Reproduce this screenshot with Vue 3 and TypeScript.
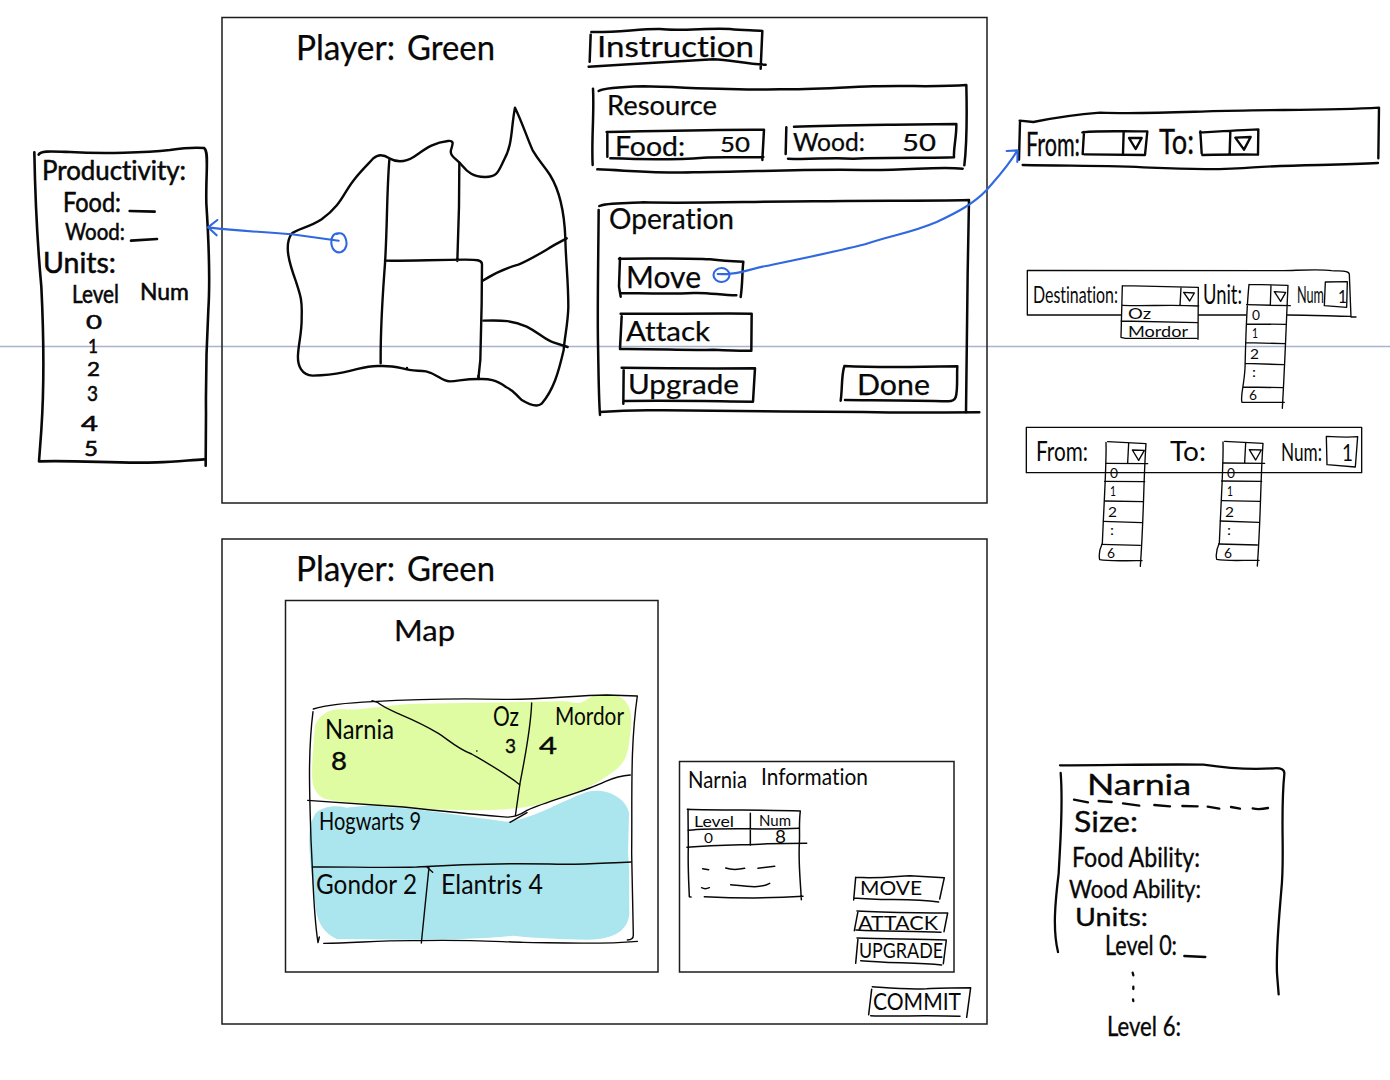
<script setup lang="ts">
type Label = [text: string, x: number, baseline: number, width: number, capHeight: number]
interface Group { name: string; ink: number; labels: Label[] }
interface Sketch { name: string; x: number; y: number; pen: number; strokes: string[]; color?: string }

const CAP = 0.72

const column = (x: number, y: number): Label[] => [
  ['0', x + 3, y, 8, 10],
  ['1', x + 3, y + 18, 6, 9],
  ['2', x + 1, y + 39, 9, 10],
  [':', x + 3, y + 57, 4, 10],
  ['6', x, y + 80, 8, 10],
]

const groups: Group[] = [
  {
    name: 'productivity', ink: 0.55,
    labels: [
      ['Productivity:', 42, 180, 144, 20],
      ['Food:', 63, 212, 58, 19], ['Wood:', 65, 240, 60, 16.5],
      ['Units:', 43, 273, 73, 21], ['Level', 72, 303, 47, 18], ['Num', 140, 300, 49, 16.5],
      ['0', 86, 329, 16, 14.5], ['1', 88, 353, 10, 14], ['2', 87, 376, 13, 14],
      ['3', 87, 401, 11, 15], ['4', 81, 431, 17, 15], ['5', 84, 456, 14, 15],
    ],
  },
  {
    name: 'game', ink: 0.25,
    labels: [
      ['Player:', 296, 60, 99, 25], ['Green', 407, 60, 88, 25],
      ['Instruction', 597, 57, 157, 21], ['Resource', 607, 115, 110, 20],
      ['Food:', 615, 156, 70, 19], ['50', 720, 152, 30, 15.5],
      ['Wood:', 793, 151, 72, 17.5], ['50', 902, 151, 34, 16],
      ['Operation', 609, 229, 125, 21], ['Move', 626, 288, 75, 22],
      ['Attack', 626, 341, 84, 20], ['Upgrade', 628, 394, 111, 20], ['Done', 857, 395, 73, 21],
      ['Player:', 296, 581, 99, 25], ['Green', 407, 581, 88, 25],
      ['Map', 394, 641, 61, 21],
    ],
  },
  {
    name: 'route', ink: 0.35,
    labels: [['From:', 1026, 156, 54, 23], ['To:', 1159, 154, 35, 25]],
  },
  {
    name: 'fine', ink: 0,
    labels: [
      ['Destination:', 1033, 303, 85, 17], ['Oz', 1128, 319, 23, 11], ['Mordor', 1128, 337, 60, 11],
      ['Unit:', 1203, 304, 39, 19], ['Num', 1297, 303, 27, 16], ['1', 1338, 303, 9, 13],
      ...column(1249, 320),
      ['From:', 1036, 461, 52, 19], ['To:', 1170, 461, 36, 20], ['Num:', 1281, 461, 41, 18],
      ['1', 1342, 461, 11, 17],
      ...column(1107, 478), ...column(1224, 478),
      ['Narnia', 325, 739, 69, 19], ['Oz', 493, 726, 26, 19], ['Mordor', 555, 725, 69, 18],
      ['Hogwarts 9', 319, 830, 102, 18],
      ['Narnia', 688, 788, 59, 17], ['Information', 761, 785, 107, 16.5],
      ['Level', 694, 827, 40, 11.5], ['Num', 759, 826, 32, 11], ['0', 704, 843, 9, 10], ['8', 775, 843, 11, 12],
      ['MOVE', 860, 895, 62, 14], ['ATTACK', 858, 930, 80, 14],
      ['UPGRADE', 859, 958, 84, 15], ['COMMIT', 873, 1010, 88, 17],
      ['Gondor 2', 316, 894, 101, 20], ['Elantris 4', 441, 894, 102, 19],
    ],
  },
  {
    name: 'counts', ink: 0.4,
    labels: [['8', 331, 770, 16, 18], ['3', 505, 753, 11, 14.5], ['4', 539, 754, 18, 16]],
  },
  {
    name: 'territory', ink: 0.35,
    labels: [
      ['Narnia', 1087, 795, 104, 21], ['Size:', 1074, 832, 64, 21],
      ['Food Ability:', 1072, 867, 128, 20],
      ['Wood Ability:', 1069, 898, 132, 18],
      ['Units:', 1075, 926, 73, 18], ['Level 0:', 1105, 955, 72, 19],
      ['Level 6:', 1107, 1036, 74, 19],
    ],
  },
]

const optionBox = [
  'M293 80 L408 86 M288 82 C290 140 284 220 277 385 C270 400 266 420 269 434 C300 440 350 436 396 437 M408 86 C400 200 402 300 391 454',
  'M356 85 L353 143 M288 145 L413 146 M284 199 L404 200 M284 258 L398 260 M280 319 L395 323 M275 388 L391 391',
  'M367 105 L403 106 L386 136 Z',
]

const sketches: Sketch[] = [
  {
    name: 'productivity', x: 0, y: 130, pen: 2.6,
    strokes: [
      'M103 67 C106 230 113 350 124 470 C131 610 132 780 124 900 L117 994 C240 990 360 1002 470 997 C530 996 570 990 612 988',
      'M116 74 C122 62 150 64 210 66 C310 72 440 68 510 60 C550 54 590 52 612 54 C628 62 617 130 619 220 C628 360 630 460 625 540 C619 650 617 740 618 850 L617 1007',
      'M389 243 L464 245 M393 332 L471 327',
    ],
  },
  {
    name: 'continent', x: 220, y: 10, pen: 2.4,
    strokes: [
      'M215 671 C230 657 270 652 305 628 C365 584 370 550 400 512 C425 480 447 460 460 445 C475 431 492 434 508 445 C535 460 560 454 582 440 C610 422 635 398 684 393 C704 391 698 403 693 420 C688 438 710 447 727 467 C743 487 760 500 794 501 C832 502 835 485 852 450 C879 400 872 360 885 293 C907 338 919 378 938 421 C960 458 972 466 990 495 C1021 545 1033 605 1036 684 C1037 750 1045 810 1045 890 C1044 940 1034 980 1031 1020 C1015 1090 1000 1140 965 1181 C950 1194 925 1182 904 1169 C885 1152 884 1143 858 1131 C820 1104 800 1108 775 1107 C735 1107 719 1112 690 1114 C660 1112 655 1092 618 1084 C590 1081 572 1083 548 1075 C520 1069 500 1067 480 1068 C435 1066 420 1078 370 1087 C330 1095 305 1096 278 1097 C245 1096 232 1067 234 1035 C236 995 246 970 245 920 C247 870 241 855 228 815 C208 760 191 705 215 671 Z',
      'M508 450 C500 550 502 650 495 760 C488 860 481 940 482 1060',
      'M718 458 L717 590 L712 753 M495 752 C570 753 650 749 735 749 C770 749 785 749 786 762 L785 880 L781 1050 L775 1107',
      'M788 812 C820 792 855 775 895 764 C940 745 980 718 1005 704 L1040 685',
      'M790 932 C850 930 880 932 920 950 C960 970 975 990 1000 997 L1043 1011 M561 1074 L561 1076 M775 1098 L776 1104',
    ],
  },
  {
    name: 'resource', x: 580, y: 10, pen: 2.5,
    strokes: [
      'M34 66 C110 68 180 56 240 57 C300 64 400 52 450 57 C490 62 520 60 547 63 L542 176 M32 74 L29 155 M26 170 C150 162 300 154 400 148 C450 149 500 163 557 164',
      'M56 243 C70 234 120 231 190 229 C320 232 450 240 600 238 C700 238 780 232 880 229 C980 226 1080 232 1159 225 C1161 310 1162 390 1153 466 M39 236 C43 310 34 390 38 465 M52 478 C150 482 240 490 340 487 C510 486 650 477 850 480 C990 482 1070 468 1148 476',
      'M80 366 C230 363 390 358 552 359 L547 450 M82 372 L82 440 M91 445 C180 448 280 450 370 443 C440 440 500 444 550 441',
      'M642 350 C750 348 850 343 940 344 L1129 342 C1130 380 1120 415 1122 442 C1060 445 940 442 820 446 C740 441 700 450 624 446 M619 352 L617 432',
    ],
  },
  {
    name: 'operation', x: 580, y: 190, pen: 2.5,
    strokes: [
      'M58 48 C75 38 130 40 190 37 C320 41 500 35 700 34 C850 30 1020 34 1167 30 L1163 250 L1158 668 M56 60 C55 200 52 350 54 460 C56 560 56 620 60 675 M60 666 C110 662 160 659 250 661 C450 664 650 664 850 666 C990 669 1070 667 1198 667',
      'M117 206 C230 206 320 203 390 208 C430 213 460 214 490 215 C486 250 488 280 482 321 M120 204 L117 290 L122 320 M120 309 C200 310 270 313 340 309 C390 307 420 316 469 316',
      'M122 371 C220 373 340 370 515 371 L514 482 M125 379 L120 476 M120 477 C240 476 320 482 400 479 C440 481 480 483 514 482',
      'M125 533 C240 535 390 536 525 535 L519 635 C400 634 300 631 132 633 M131 540 L130 641',
      'M793 528 C880 533 990 532 1132 529 C1130 560 1134 600 1127 622 Q1122 634 1105 634 C1010 631 900 631 795 630 M792 532 C784 560 787 600 782 632',
    ],
  },
  {
    name: 'route', x: 1000, y: 90, pen: 2.4,
    strokes: [
      'M59 92 L100 96 C150 86 210 75 300 68 C410 72 500 68 620 64 C800 58 980 62 1137 53 L1135 205 M60 95 L57 209 M68 225 C220 228 340 226 450 233 C580 239 680 239 760 232 C890 224 1010 226 1134 219',
      'M247 127 C310 121 370 125 442 124 L435 195 L253 193 M252 126 L248 192 M371 126 L369 190 M387 144 L425 144 L407 177 Z',
      'M600 128 C660 124 715 120 775 118 L774 194 C720 193 660 194 607 195 M601 124 L605 190 M691 126 L689 190 M706 143 L752 141 L732 179 Z',
    ],
  },
  {
    name: 'destination', x: 1010, y: 255, pen: 1.35,
    strokes: [
      'M52 46 L820 47 C870 46 930 42 965 47 C995 49 1018 46 1018 58 L1023 186 L1038 186 M52 46 L52 180 L332 180 M566 180 L708 180 M832 180 C900 180 960 183 1022 184',
      'M337 92 L565 97 L564 253 M337 92 L333 247 L346 250 L560 250 M338 151 C400 154 490 148 566 153 M333 198 L563 203 M513 98 L510 152 M521 112 L553 114 L539 138 Z',
      'M717 88 L834 91 C829 200 825 320 817 460 M717 88 C708 180 707 270 705 340 C702 395 690 425 696 442 L823 442 M783 90 L781 150 M710 149 L841 152 M710 207 L827 208 M708 263 L824 266 M705 325 L820 329 M700 396 L819 398 M793 110 L827 112 L812 139 Z',
      'M946 81 L1012 80 L1010 157 L943 152 Z',
    ],
  },
  {
    name: 'upgrade-from', x: 1010, y: 415, pen: 1.35,
    strokes: ['M49 37 H1055 V173 H49 Z', ...optionBox, 'M949 64 C980 66 1010 68 1043 65 L1036 156 L951 149 Z'],
  },
  { name: 'upgrade-to', x: 1127, y: 414.7, pen: 1.35, strokes: optionBox },
  {
    name: 'regions', x: 290, y: 680, pen: 1.4,
    strokes: [
      'M70 87 C110 75 180 68 248 65 C400 56 530 55 640 58 C760 60 850 46 950 45 L1042 48 C1020 200 1027 350 1025 520 L1030 765 Q1030 780 1012 780 M69 95 C52 230 60 370 63 480 C70 610 70 700 84 788 L88 771 M101 790 C200 789 280 780 390 782 C520 779 600 784 700 787 C830 789 930 794 1042 784',
      'M246 62 L262 67 C280 82 300 90 330 103 C370 120 410 139 445 160 C470 175 500 205 545 222 C600 254 650 282 690 315 M725 69 C722 150 705 230 690 310 L676 408 M53 361 C130 366 230 374 340 381 C450 393 550 403 633 410 C670 415 690 405 711 391 C780 360 880 337 945 305 C980 289 1000 286 1021 285 M660 427 L711 398',
      'M67 561 C160 560 270 564 380 561 C520 552 620 549 780 552 C870 556 950 548 1024 546 M417 562 L408 650 L394 789 M410 560 L428 577 M560 213 L561 213',
    ],
  },
  {
    name: 'information', x: 670, y: 750, pen: 1.5,
    strokes: [
      'M52 178 C160 182 290 178 391 183 C386 220 390 250 388 282 C385 340 391 390 394 449 M54 178 L55 290 C53 350 57 410 58 440 L63 441 M103 440 C210 445 310 445 399 439',
      'M55 241 C140 232 270 240 388 235 M51 292 C160 282 240 286 290 281 L410 280 M241 190 L241 286',
      'M98 356 L116 359 M167 354 Q190 362 224 355 M264 355 L314 349 M95 413 Q105 419 118 413 M182 404 C230 409 270 416 299 400',
      'M557 382 C640 386 680 378 720 377 L823 383 L809 447 M557 382 L551 450 M551 444 C640 453 720 444 806 456',
      'M561 483 C650 489 740 487 833 489 L822 545 M564 484 L553 542 M558 540 C640 545 720 543 813 547',
      'M561 564 C650 567 740 567 829 570 L820 641 M564 565 L557 640 M572 632 C650 639 740 638 815 645',
      'M607 710 C650 713 710 719 770 716 C810 713 850 713 902 713 L890 802 M605 718 L596 794 M602 797 C680 800 760 795 870 799',
    ],
  },
  {
    name: 'territory', x: 1040, y: 750, pen: 2.3,
    strokes: [
      'M60 46 C200 46 360 42 490 44 C550 53 620 60 700 55 Q735 52 733 72 C720 200 735 320 724 420 C715 530 708 600 711 670 L716 733 M62 69 C70 170 61 270 56 370 C45 460 38 540 54 606',
      'M102 149 L144 157 M176 153 L215 156 M249 160 L298 167 M343 165 L390 169 M427 168 L473 169 M503 170 L538 176 M573 171 L600 176 M638 175 Q655 180 684 174',
      'M433 618 L496 621 M278 668 L280 676 M280 710 L280 717 M279 748 L280 753',
    ],
  },
  {
    name: 'map-link', x: 0, y: 130, pen: 2.1, color: '#3068e0',
    strokes: ['M624 292 C720 303 790 307 870 312 L1016 332 M652 270 L624 292 L650 316 M1016 310 C1000 309 993 322 994 340 C997 363 1012 370 1024 366 C1040 358 1043 340 1036 323 C1031 310 1020 307 1010 312'],
  },
  {
    name: 'move-link', x: 580, y: 190, pen: 2.1, color: '#3068e0',
    strokes: ['M413 252 C470 255 500 240 553 229 C650 209 760 187 855 163 C940 134 990 130 1070 96 C1130 68 1180 42 1220 0 C1250 -35 1280 -65 1312 -118 M1280 -117 L1313 -119 L1312 -84 M424 234 A24 21 0 1 0 425 276 A24 21 0 1 0 424 234'],
  },
]
</script>

<template>
  <main class="board">
    <svg class="canvas" viewBox="0 0 1390 1080" width="1390" height="1080" role="img" aria-label="Game interface sketches">
      <path class="guide" d="M0 346.6 H1390" />

      <g class="frames">
        <rect x="222" y="17.5" width="765" height="485.5" />
        <rect x="222" y="539" width="765" height="485" />
        <rect x="285.5" y="600.5" width="372.5" height="371.5" />
        <rect x="679.5" y="761.5" width="274.5" height="210.5" />
      </g>

      <g transform="translate(290 680) scale(0.33333)">
        <path class="green" d="M75 135 C90 102 120 85 160 88 C220 92 270 75 380 71 L820 64 C850 65 865 76 885 62 C920 35 970 35 998 56 C1025 76 1029 120 1020 165 C1014 220 1010 250 960 282 C900 325 830 355 760 370 C690 392 570 393 400 388 C280 375 150 370 100 355 C60 330 66 290 67 240 Z" />
        <path class="blue" d="M75 402 C95 380 135 374 170 383 C220 378 250 372 280 381 C390 385 520 408 650 425 C720 420 800 370 890 336 C950 320 1010 355 1017 400 L1014 520 C1020 580 1016 640 1018 700 C1015 755 965 780 890 779 C820 778 740 775 670 767 C600 776 480 779 400 779 L140 777 C105 760 85 735 78 690 C65 590 50 480 62 430 Z" />
      </g>

      <g
        v-for="s in sketches"
        :key="s.name"
        class="ink"
        :transform="`translate(${s.x} ${s.y}) scale(0.33333)`"
        :stroke="s.color ?? '#080808'"
        :stroke-width="s.pen * 3"
      >
        <path v-for="(d, i) in s.strokes" :key="i" :d="d" />
      </g>

      <g v-for="g in groups" :key="g.name" class="writing" :stroke-width="g.ink">
        <text
          v-for="([text, x, y, width, cap], i) in g.labels"
          :key="i"
          :x="x"
          :y="y"
          :font-size="cap / CAP"
          :textLength="width"
          lengthAdjust="spacingAndGlyphs"
        >{{ text }}</text>
      </g>
    </svg>
  </main>
</template>

<style scoped>
.board {
  width: 1390px;
  height: 1080px;
  overflow: hidden;
  background: #fff;
}
.canvas {
  display: block;
}
.guide {
  stroke: #a9b4cc;
  stroke-width: 1.5;
}
.frames rect {
  fill: none;
  stroke: #1c1c1c;
  stroke-width: 1.5;
}
.green {
  fill: #e0fca2;
}
.blue {
  fill: #abe6ef;
}
.ink path {
  fill: none;
  stroke-linecap: round;
  stroke-linejoin: round;
}
.writing text {
  font-family: Lato, "Open Sans", sans-serif;
  font-variant-ligatures: none;
  fill: #080808;
  stroke: #080808;
}
</style>

<style>
body {
  background: #fff;
}
</style>
